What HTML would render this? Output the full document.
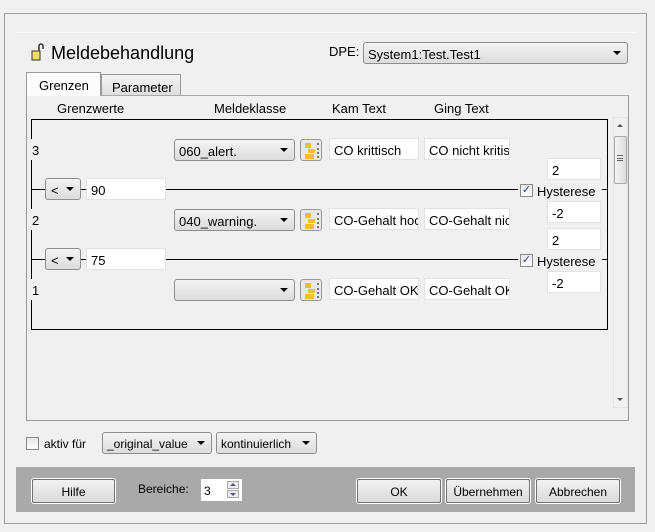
<!DOCTYPE html>
<html><head><meta charset="utf-8"><style>
*{box-sizing:border-box;margin:0;padding:0}
body{width:655px;height:532px;background:#f0f0f0;font-family:"Liberation Sans",sans-serif;font-size:13px;color:#000;position:relative;overflow:hidden}
.a{position:absolute}
.combo{position:absolute;border:1px solid #8e8e8e;border-radius:3px;background:linear-gradient(#f4f4f4,#dcdcdc);height:22px;padding:4px 0 0 4px;font-size:13px;white-space:nowrap;overflow:hidden}
.combo:after{content:"";position:absolute;right:6px;top:8px;border-left:4px solid transparent;border-right:4px solid transparent;border-top:4px solid #000}
.inp{position:absolute;background:#fff;border:1px solid #e2e2e2;height:22px;padding:4px 0 0 4px;white-space:nowrap;overflow:hidden}
.btn{position:absolute;border:1px solid #707070;border-radius:2px;background:linear-gradient(#f2f2f2,#dadada);height:24px;text-align:center;padding-top:5px;box-shadow:0 0 0 1px #fff}
.hl{position:absolute;height:1px;background:#000}
.icon{position:absolute;width:22px;height:22px;border:1px solid #999;border-radius:3px;background:#e8e8e8}
.icon i{position:absolute;background:#f0c030}
.icon b{position:absolute;left:16px;top:3px;width:2px;height:15px;border-left:2px dotted #777}
.cb{position:absolute;width:13px;height:13px;border:1px solid #8a8a8a;background:linear-gradient(#e6e6e6,#fff)}
</style></head><body>
<div class="a" style="left:4px;top:13px;width:643px;height:511px;border:1px solid #a0a0a0"></div>
<div class="a" style="left:16px;top:32px;width:620px;height:480px;border-top:1px solid #fafafa"></div>
<svg class="a" style="left:31px;top:42px" width="14" height="20"><rect x="1" y="9" width="8" height="9" fill="#f0e060" stroke="#333"/><path d="M8 9V4a2 2 0 0 1 4 0v3" fill="none" stroke="#333" stroke-width="1.5"/></svg>
<div class="a" style="left:51px;top:43px;font-size:18px">Meldebehandlung</div>
<div class="a" style="left:329px;top:44px">DPE:</div>
<div class="combo" style="left:363px;top:42px;width:265px;height:22px;font-size:13px">System1:Test.Test1</div>
<div class="a" style="left:26px;top:72px;width:75px;height:24px;border:1px solid #999;border-bottom:none;background:#fcfcfc;padding:5px 0 0 12px;z-index:2">Grenzen</div>
<div class="a" style="left:101px;top:74px;width:80px;height:22px;border:1px solid #999;border-bottom:none;background:linear-gradient(#f4f4f4,#ddd);padding:5px 0 0 10px">Parameter</div>
<div class="a" style="left:26px;top:95px;width:603px;height:326px;border:1px solid #999;border-top:1px solid #aaa"></div>
<div class="a" style="left:57px;top:101px">Grenzwerte</div>
<div class="a" style="left:214px;top:101px">Meldeklasse</div>
<div class="a" style="left:332px;top:101px">Kam Text</div>
<div class="a" style="left:434px;top:101px">Ging Text</div>
<div class="a" style="left:31px;top:119px;width:577px;height:211px;border-top:1px solid #000;border-right:1px solid #000;border-bottom:1px solid #000"></div>
<div class="a" style="left:31px;top:119px;width:1px;height:20px;background:#000"></div>
<div class="a" style="left:31px;top:160px;width:1px;height:49px;background:#000"></div>
<div class="a" style="left:31px;top:230px;width:1px;height:49px;background:#000"></div>
<div class="a" style="left:31px;top:300px;width:1px;height:30px;background:#000"></div>
<div class="a" style="left:32px;top:143px">3</div>
<div class="a" style="left:32px;top:213px">2</div>
<div class="a" style="left:32px;top:283px">1</div>
<div class="hl" style="left:32px;top:189px;width:488px"></div>
<div class="hl" style="left:32px;top:259px;width:488px"></div>
<div class="hl" style="left:602px;top:189px;width:6px"></div>
<div class="hl" style="left:602px;top:259px;width:6px"></div>
<div class="combo" style="left:45px;top:178px;width:36px;padding-left:5px">&lt;</div>
<div class="inp" style="left:86px;top:178px;width:80px">90</div>
<div class="combo" style="left:45px;top:248px;width:36px;padding-left:5px">&lt;</div>
<div class="inp" style="left:86px;top:248px;width:80px">75</div>
<div class="combo" style="left:174px;top:139px;width:121px">060_alert.</div>
<div class="combo" style="left:174px;top:209px;width:121px">040_warning.</div>
<div class="combo" style="left:174px;top:279px;width:121px"></div>
<div class="icon" style="left:300px;top:139px"><i style="left:4px;top:3px;width:6px;height:5px"></i><i style="left:7px;top:9px;width:7px;height:4px"></i><i style="left:4px;top:14px;width:9px;height:5px"></i><b></b></div>
<div class="icon" style="left:300px;top:209px"><i style="left:4px;top:3px;width:6px;height:5px"></i><i style="left:7px;top:9px;width:7px;height:4px"></i><i style="left:4px;top:14px;width:9px;height:5px"></i><b></b></div>
<div class="icon" style="left:300px;top:279px"><i style="left:4px;top:3px;width:6px;height:5px"></i><i style="left:7px;top:9px;width:7px;height:4px"></i><i style="left:4px;top:14px;width:9px;height:5px"></i><b></b></div>
<div class="inp" style="left:329px;top:138px;width:90px">CO krittisch</div>
<div class="inp" style="left:424px;top:138px;width:86px">CO nicht kritis</div>
<div class="inp" style="left:329px;top:208px;width:90px">CO-Gehalt hoch</div>
<div class="inp" style="left:424px;top:208px;width:86px">CO-Gehalt nicht</div>
<div class="inp" style="left:329px;top:278px;width:90px">CO-Gehalt OK</div>
<div class="inp" style="left:424px;top:278px;width:86px">CO-Gehalt OK</div>
<div class="inp" style="left:547px;top:158px;width:54px">2</div>
<div class="inp" style="left:547px;top:201px;width:54px">-2</div>
<div class="inp" style="left:547px;top:228px;width:54px">2</div>
<div class="inp" style="left:547px;top:271px;width:54px">-2</div>
<div class="a" style="left:518px;top:182px;background:#f0f0f0;width:84px;height:16px"></div>
<div class="cb" style="left:520px;top:184px;color:#334488;font-size:11px;line-height:11px;text-align:center">✓</div>
<div class="a" style="left:537px;top:184px;">Hysterese</div>
<div class="a" style="left:518px;top:252px;background:#f0f0f0;width:84px;height:16px"></div>
<div class="cb" style="left:520px;top:254px;color:#334488;font-size:11px;line-height:11px;text-align:center">✓</div>
<div class="a" style="left:537px;top:254px;">Hysterese</div>
<div class="a" style="left:613px;top:117px;width:15px;height:291px;background:#f0f0f0;border:1px solid #e4e4e4"></div>
<div class="a" style="left:614px;top:136px;width:13px;height:48px;border:1px solid #aaa;border-radius:2px;background:linear-gradient(90deg,#f4f4f4,#dcdcdc)"></div>
<div class="a" style="left:617px;top:155px;width:6px;height:6px;border-top:1px solid #666;border-bottom:1px solid #666"></div>
<div class="a" style="left:617px;top:158px;width:6px;height:1px;background:#666"></div>
<div class="a" style="left:617px;top:124px;border-left:3px solid transparent;border-right:3px solid transparent;border-bottom:3px solid #555"></div>
<div class="a" style="left:617px;top:398px;border-left:3px solid transparent;border-right:3px solid transparent;border-top:3px solid #555"></div>
<div class="cb" style="left:26px;top:437px"></div>
<div class="a" style="left:44px;top:437px;font-size:12px">aktiv für</div>
<div class="combo" style="left:102px;top:432px;width:110px;height:22px;font-size:12px">_original_value</div>
<div class="combo" style="left:216px;top:432px;width:101px;height:22px;font-size:12px">kontinuierlich</div>
<div class="a" style="left:16px;top:467px;width:619px;height:45px;background:#a9a9a9"></div>
<div class="btn" style="left:32px;top:479px;width:83px;font-size:12px">Hilfe</div>
<div class="a" style="left:138px;top:482px;font-size:12px">Bereiche:</div>
<div class="a" style="left:201px;top:479px;width:41px;height:22px;background:#fff;padding:5px 0 0 3px;font-size:12px">3</div>
<div class="a" style="left:227px;top:481px;width:12px;height:8px;border:1px solid #aaa;background:#eee"></div>
<div class="a" style="left:227px;top:490px;width:12px;height:8px;border:1px solid #aaa;background:#eee"></div>
<div class="a" style="left:230px;top:483px;border-left:3px solid transparent;border-right:3px solid transparent;border-bottom:3px solid #557"></div>
<div class="a" style="left:230px;top:493px;border-left:3px solid transparent;border-right:3px solid transparent;border-top:3px solid #557"></div>
<div class="btn" style="left:357px;top:479px;width:84px;font-size:12px">OK</div>
<div class="btn" style="left:446px;top:479px;width:84px;font-size:12px">Übernehmen</div>
<div class="btn" style="left:536px;top:479px;width:84px;font-size:12px">Abbrechen</div>
</body></html>
